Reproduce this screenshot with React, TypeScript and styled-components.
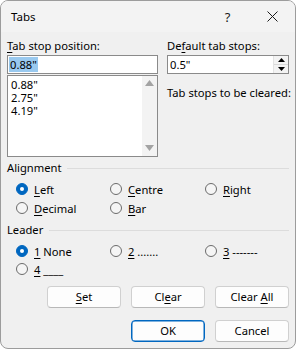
import React from 'react';
import styled, { createGlobalStyle } from 'styled-components';

const GlobalStyle = createGlobalStyle`
  html, body {
    margin: 0;
    padding: 0;
    background: #ffffff;
  }
  body {
    font-family: "Noto Sans", "Segoe UI", "Liberation Sans", sans-serif;
    font-size: 11.2px;
    color: #000;
  }
`;

const Window = styled.div`
  box-sizing: border-box;
  width: 296px;
  height: 349px;
  border: 1px solid #9c9c9c;
  border-radius: 8px;
  background: #f0f0f0;
  overflow: hidden;
  display: flex;
  flex-direction: column;
`;

const TitleBar = styled.div`
  height: 31px;
  flex: none;
  display: flex;
  align-items: center;
  background: #f3f3f3;
`;

const Title = styled.div`
  flex: 1;
  padding-left: 10px;
  font-size: 11.5px;
`;

const CaptionButton = styled.div`
  width: 45px;
  height: 31px;
  display: flex;
  align-items: center;
  justify-content: center;
  font-size: 13px;
  color: #1a1a1a;
`;

const Body = styled.div`
  flex: 1;
  padding: 6px 6px 0 6px;
  display: flex;
  flex-direction: column;
`;

const Top = styled.div`
  display: grid;
  grid-template-columns: 151px 122px;
  column-gap: 9px;
`;

const Column = styled.div`
  display: flex;
  flex-direction: column;
`;

const Label = styled.div<{ $mt?: number }>`
  line-height: 16px;
  height: 16px;
  margin-top: ${(p) => p.$mt ?? 0}px;
  margin-bottom: 1px;
  white-space: nowrap;
`;

const U = styled.span`
  text-decoration: underline;
  text-underline-offset: 2px;
`;

const TextBox = styled.div`
  box-sizing: border-box;
  height: 19px;
  background: #fff;
  border: 1px solid #8a8a8a;
  display: flex;
  align-items: center;
  padding-left: 1px;
  line-height: 15px;
`;

const Selected = styled.span`
  background: #99c9ef;
  padding: 0 1px;
`;

const SpinValue = styled.div`
  flex: 1;
  padding-left: 1px;
`;

const Spinner = styled.div`
  width: 14px;
  height: 17px;
  display: flex;
  flex-direction: column;
  border-left: 1px solid #e3e3e3;
`;

const SpinButton = styled.div<{ $top?: boolean }>`
  flex: 1;
  display: flex;
  align-items: center;
  justify-content: center;
  background: #f3f3f3;
  border-bottom: ${(p) => (p.$top ? '1px solid #d9d9d9' : 'none')};
`;

const ListBox = styled.div`
  box-sizing: border-box;
  margin-top: 1px;
  height: 82px;
  background: #fff;
  border: 1px solid #8a8a8a;
  display: flex;
`;

const ListItems = styled.div`
  flex: 1;
  padding: 2px 0 0 3px;
`;

const ListItem = styled.div`
  height: 13px;
  line-height: 13px;
`;

const ScrollBar = styled.div`
  width: 15px;
  background: #f3f3f3;
  display: flex;
  flex-direction: column;
  justify-content: space-between;
  align-items: center;
  padding: 4px 0 5px;
`;

const GroupHeader = styled.div<{ $mt: number }>`
  display: flex;
  align-items: center;
  gap: 6px;
  margin-top: ${(p) => p.$mt}px;
  height: 16px;
  line-height: 16px;
`;

const Rule = styled.div`
  flex: 1;
  height: 1px;
  background: #dcdcdc;
`;

const RadioGrid = styled.div<{ $mt: number; $gap: number }>`
  display: grid;
  grid-template-columns: 94px 95px auto;
  grid-auto-rows: 18px;
  row-gap: ${(p) => p.$gap}px;
  margin-top: ${(p) => p.$mt}px;
  padding-left: 9px;
`;

const RadioItem = styled.div`
  display: flex;
  align-items: center;
  gap: 6px;
  white-space: nowrap;
`;

const RadioCircle = styled.div<{ $on?: boolean }>`
  box-sizing: border-box;
  width: 12px;
  height: 12px;
  border-radius: 50%;
  flex: none;
  background: ${(p) => (p.$on ? '#0067c0' : '#f5f5f5')};
  border: 1px solid ${(p) => (p.$on ? '#0067c0' : '#6b6b6b')};
  display: flex;
  align-items: center;
  justify-content: center;
  &::after {
    content: '';
    display: ${(p) => (p.$on ? 'block' : 'none')};
    width: 4px;
    height: 4px;
    border-radius: 50%;
    background: #fff;
  }
`;

const ButtonRow = styled.div<{ $mt: number }>`
  display: flex;
  justify-content: flex-end;
  gap: 10px;
  margin-top: ${(p) => p.$mt}px;
`;

const Button = styled.div<{ $default?: boolean }>`
  box-sizing: border-box;
  width: 74px;
  height: 22px;
  border-radius: 4px;
  background: #fdfdfd;
  border: 1px solid ${(p) => (p.$default ? '#0067c0' : '#d0d0d0')};
  border-bottom-color: ${(p) => (p.$default ? '#0067c0' : '#b8b8b8')};
  box-shadow: ${(p) => (p.$default ? 'inset 0 0 0 0.5px #0067c0' : 'none')};
  display: flex;
  align-items: center;
  justify-content: center;
  line-height: 16px;
  white-space: pre;
`;

function Tri({ up, color = '#000' }: { up?: boolean; color?: string }) {
  return (
    <svg width="7" height="4" viewBox="0 0 7 4">
      <path d={up ? 'M0 4 L3.5 0 L7 4 Z' : 'M0 0 L3.5 4 L7 0 Z'} fill={color} />
    </svg>
  );
}

function ScrollArrow({ up }: { up?: boolean }) {
  return (
    <svg width="9" height="6" viewBox="0 0 9 6">
      <path d={up ? 'M0 6 L4.5 0 L9 6 Z' : 'M0 0 L4.5 6 L9 0 Z'} fill="#a3a3a3" />
    </svg>
  );
}

function Radio({ on, children }: { on?: boolean; children: React.ReactNode }) {
  return (
    <RadioItem>
      <RadioCircle $on={on} />
      <span>{children}</span>
    </RadioItem>
  );
}

export default function App() {
  return (
    <>
      <GlobalStyle />
      <Window>
        <TitleBar>
          <Title>Tabs</Title>
          <CaptionButton>?</CaptionButton>
          <CaptionButton>
            <svg width="11" height="11" viewBox="0 0 11 11">
              <path d="M0.5 0.5 L10.5 10.5 M10.5 0.5 L0.5 10.5" stroke="#1a1a1a" strokeWidth="1" />
            </svg>
          </CaptionButton>
        </TitleBar>
        <Body>
          <Top>
            <Column>
              <Label>
                <U>T</U>ab stop position:
              </Label>
              <TextBox>
                <Selected>0.88"</Selected>
              </TextBox>
              <ListBox>
                <ListItems>
                  <ListItem>0.88"</ListItem>
                  <ListItem>2.75"</ListItem>
                  <ListItem>4.19"</ListItem>
                </ListItems>
                <ScrollBar>
                  <ScrollArrow up />
                  <ScrollArrow />
                </ScrollBar>
              </ListBox>
            </Column>
            <Column>
              <Label>
                De<U>f</U>ault tab stops:
              </Label>
              <TextBox>
                <SpinValue>0.5"</SpinValue>
                <Spinner>
                  <SpinButton $top>
                    <Tri up />
                  </SpinButton>
                  <SpinButton>
                    <Tri />
                  </SpinButton>
                </Spinner>
              </TextBox>
              <Label $mt={11}>Tab stops to be cleared:</Label>
            </Column>
          </Top>

          <GroupHeader $mt={3}>
            Alignment
            <Rule />
          </GroupHeader>
          <RadioGrid $mt={4} $gap={1}>
            <Radio on>
              <U>L</U>eft
            </Radio>
            <Radio>
              <U>C</U>entre
            </Radio>
            <Radio>
              <U>R</U>ight
            </Radio>
            <Radio>
              <U>D</U>ecimal
            </Radio>
            <Radio>
              <U>B</U>ar
            </Radio>
          </RadioGrid>

          <GroupHeader $mt={5}>
            Leader
            <Rule />
          </GroupHeader>
          <RadioGrid $mt={4} $gap={0}>
            <Radio on>
              <U>1</U> None
            </Radio>
            <Radio>
              <U>2</U> .......
            </Radio>
            <Radio>
              <U>3</U> -------
            </Radio>
            <Radio>
              <U>4</U> ____
            </Radio>
          </RadioGrid>

          <ButtonRow $mt={8}>
            <Button>
              <span>
                <U>S</U>et
              </span>
            </Button>
            <Button>
              <span>
                Cl<U>e</U>ar
              </span>
            </Button>
            <Button>
              <span>
                Clear <U>A</U>ll
              </span>
            </Button>
          </ButtonRow>
          <ButtonRow $mt={12}>
            <Button $default>OK</Button>
            <Button>Cancel</Button>
          </ButtonRow>
        </Body>
      </Window>
    </>
  );
}
